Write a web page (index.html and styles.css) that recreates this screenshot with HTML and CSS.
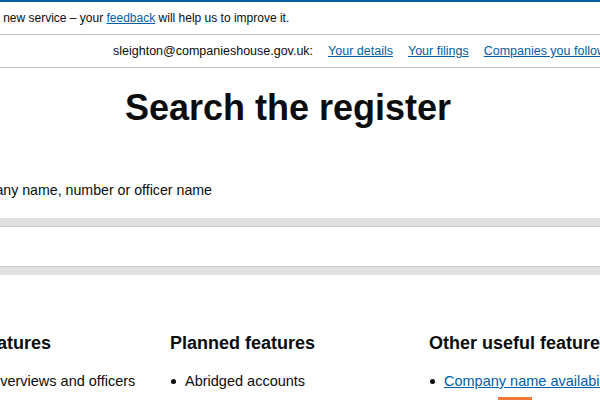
FILE: index.html
```html
<!DOCTYPE html>
<html lang="en">
<head>
<meta charset="utf-8">
<title>Search the register</title>
<link rel="stylesheet" href="styles.css">
</head>
<body>
<div class="top-bar"></div>
<div class="phase-banner">
  <div class="inner phase-inner">
    <strong class="tag">BETA</strong>
    <span>This is a new service – your <a href="#">feedback</a> will help us to improve it.</span>
  </div>
</div>
<nav class="account-bar">
  <div class="inner account-inner">
    <span class="email">sleighton@companieshouse.gov.uk:</span>
    <a href="#">Your details</a>
    <a href="#">Your filings</a>
    <a href="#">Companies you follow</a>
    <a href="#">Sign out</a>
  </div>
</nav>
<main class="inner">
  <h1 class="title">Search the register</h1>
  <label class="search-label" for="q">Enter a company name, number or officer name</label>
  <div class="search-box">
    <input class="search-input" id="q" type="text">
  </div>
  <div class="features">
    <section class="feature-col">
      <h2>Current features</h2>
      <ul class="feature-list">
        <li>Company overviews and officers</li>
        <li>Charges</li>
      </ul>
    </section>
    <section class="feature-col">
      <h2>Planned features</h2>
      <ul class="feature-list">
        <li>Abridged accounts</li>
        <li><a href="#">Follow company filings</a></li>
      </ul>
    </section>
    <section class="feature-col">
      <h2>Other useful features</h2>
      <ul class="feature-list">
        <li><a href="#">Company name availability</a></li>
        <li><a href="#">Search</a><span class="badge">NEW</span></li>
      </ul>
    </section>
  </div>
</main>
</body>
</html>
```
FILE: styles.css
```css
html, body {
  overflow: hidden;
}
body {
  margin: 0;
  font-family: "Liberation Sans", Arial, sans-serif;
  color: #0b0c0c;
  background: #ffffff;
}
a {
  color: #005ea5;
  text-decoration: underline;
}
.top-bar {
  height: 2px;
  background: #005ea5;
}
.inner {
  width: 754px;
  margin-left: -89px;
}
.phase-banner {
  height: 32px;
  border-bottom: 1px solid #bfc1c3;
  display: flex;
  align-items: center;
}
.phase-inner {
  font-size: 12px;
  line-height: 16px;
  white-space: nowrap;
}
.tag {
  display: inline-block;
  width: 36px;
  margin-right: 5px;
  text-align: center;
  background: #005ea5;
  color: #fff;
  font-size: 11px;
}
.account-bar {
  height: 32px;
  border-bottom: 1px solid #bfc1c3;
  display: flex;
  align-items: center;
}
.account-inner {
  display: flex;
  gap: 15px;
  padding-left: 202px;
  font-size: 12.5px;
  white-space: nowrap;
}
.title {
  margin: 20px 0 0;
  font-size: 36px;
  line-height: 40px;
  font-weight: 700;
  text-align: center;
}
.search-label {
  display: block;
  margin-top: 52px;
  font-size: 14.2px;
  line-height: 20px;
}
.search-box {
  margin-top: 18px;
  background: #dee0e2;
  padding: 8px 0;
}
.search-input {
  display: block;
  box-sizing: border-box;
  width: 100%;
  height: 41px;
  margin: 0;
  border: 0;
  border-top: 1px solid #c6c8ca;
  border-bottom: 1px solid #c6c8ca;
  background: #ffffff;
  outline: none;
}
.features {
  margin-top: 56px;
  display: grid;
  grid-template-columns: repeat(3, 236px);
  column-gap: 23px;
}
.feature-col h2 {
  margin: 0;
  font-size: 18px;
  line-height: 24px;
  font-weight: 700;
  white-space: nowrap;
}
.feature-list {
  margin: 16px 0 0;
  padding: 0;
  list-style: none;
}
.feature-list li {
  display: flex;
  align-items: center;
  font-size: 14.5px;
  line-height: 20px;
  margin-bottom: 5px;
  white-space: nowrap;
}
.feature-list li::before {
  content: "";
  flex-shrink: 0;
  width: 5px;
  height: 5px;
  border-radius: 50%;
  background: #0b0c0c;
  margin-left: 1px;
  margin-right: 9px;
}
.badge {
  display: inline-block;
  margin-left: 8px;
  padding: 2px 4px;
  background: #f47738;
  color: #fff;
  font-size: 11px;
  font-weight: 700;
  line-height: 14px;
}
```
